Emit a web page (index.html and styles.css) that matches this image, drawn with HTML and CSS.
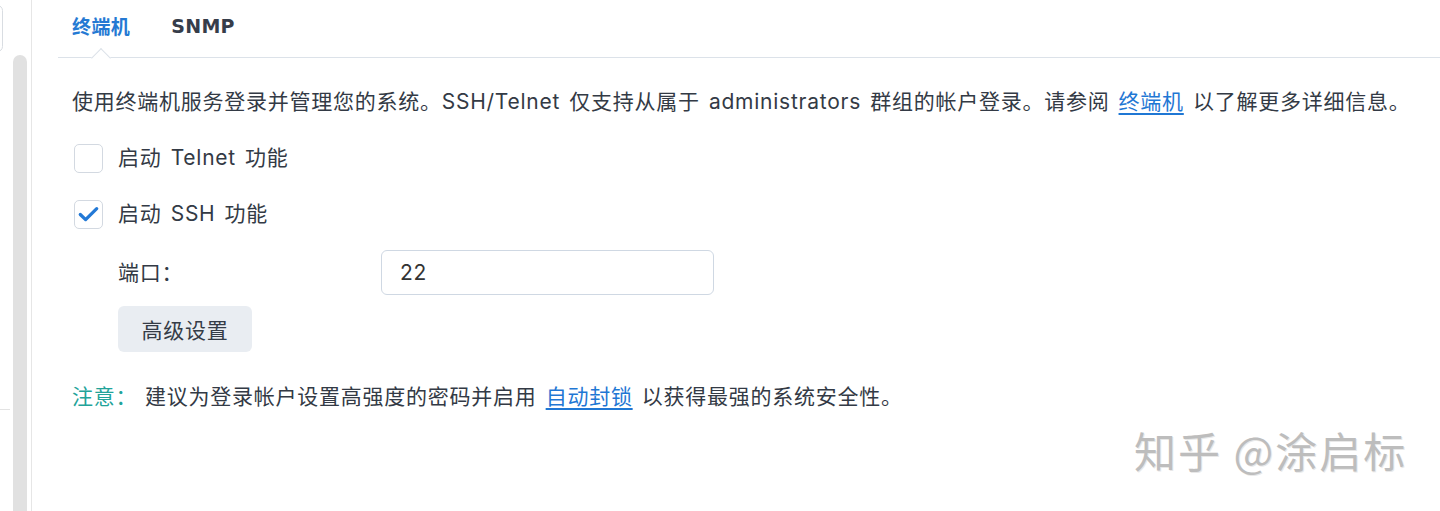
FILE: index.html
```html
<!DOCTYPE html>
<html lang="zh-CN">
<head>
<meta charset="utf-8">
<title>终端机</title>
<link rel="stylesheet" href="styles.css">
</head>
<body>
<div class="page">
  <aside class="side">
    <div class="side-left">
      <div class="side-box"></div>
      <div class="side-rule"></div>
    </div>
    <div class="scroll-track"></div>
    <div class="side-line"></div>
  </aside>
  <main class="main">
    <nav class="tabs">
      <span class="tab active">终端机<span class="caret"></span></span>
      <span class="tab latin">SNMP</span>
    </nav>
    <section class="content">
      <p class="desc">使用终端机服务登录并管理您的系统。SSH/Telnet 仅支持从属于 administrators 群组的帐户登录。请参阅 <a class="link" href="#">终端机</a> 以了解更多详细信息。</p>
      <label class="check-row">
        <span class="checkbox"></span>
        <span class="check-label">启动 Telnet 功能</span>
      </label>
      <label class="check-row">
        <span class="checkbox checked">
          <svg viewBox="0 0 28 28" width="28" height="28"><path d="M5.5 14.5 L11 19.8 L22.5 8.5" fill="none" stroke="#2379d6" stroke-width="3.4" stroke-linecap="round" stroke-linejoin="round"/></svg>
        </span>
        <span class="check-label">启动 SSH 功能</span>
      </label>
      <div class="sub">
        <div class="field-row">
          <span class="field-label">端口：</span>
          <div class="input">22</div>
        </div>
        <button class="btn" type="button">高级设置</button>
      </div>
      <p class="note"><span class="note-label">注意：</span>建议为登录帐户设置高强度的密码并启用 <a class="link" href="#">自动封锁</a> 以获得最强的系统安全性。</p>
    </section>
  </main>
  <div class="watermark">知乎 @涂启标</div>
</div>
</body>
</html>
```

FILE: styles.css
```css
* { box-sizing: border-box; }
html, body { margin: 0; padding: 0; background: #fff; }
body {
  font-family: "Inter", "Noto Sans CJK SC", sans-serif;
  color: #333a45;
  font-size: 21px;
  letter-spacing: 0.75px;
  word-spacing: 2.5px;
}
.page {
  position: relative;
  display: flex;
  width: 1440px;
  height: 511px;
  overflow: hidden;
}
.side {
  display: flex;
  width: 58px;
  flex: 0 0 58px;
  height: 511px;
}
.side-left {
  width: 13px;
  display: flex;
  flex-direction: column;
}
.side-box {
  width: 11px;
  height: 47px;
  margin-top: 5px;
  margin-left: -8px;
  border: 1px solid #d9dde2;
  border-radius: 6px;
  background: #fff;
}
.side-rule {
  margin-top: 357px;
  width: 10px;
  height: 1px;
  background: #e3e3e3;
}
.scroll-track {
  width: 14px;
  margin-top: 55px;
  height: 456px;
  background: #e1e1e1;
  border-radius: 7px 7px 0 0;
}
.side-line {
  width: 1px;
  margin-left: 4px;
  height: 511px;
  background: #e6e6e6;
}
.main {
  flex: 1;
  display: flex;
  flex-direction: column;
}
.tabs {
  position: relative;
  display: flex;
  gap: 41px;
  height: 58px;
  padding-left: 14px;
  padding-top: 12px;
  border-bottom: 1px solid #dce2e9;
}
.tab {
  position: relative;
  font-family: "Noto Sans CJK SC", sans-serif;
  font-weight: 700;
  font-size: 19px;
  line-height: 28px;
  color: #363d4a;
  letter-spacing: 0.4px;
  word-spacing: 0;
}
.tab.latin {
  font-family: "DejaVu Sans", sans-serif;
  letter-spacing: 0.3px;
}
.tab.active { color: #2579d3; }
.caret {
  position: absolute;
  left: 22px;
  top: 39px;
  width: 14px;
  height: 14px;
  background: #fff;
  border-top: 1px solid #dce2e9;
  border-left: 1px solid #dce2e9;
  transform: rotate(45deg);
}
.content {
  padding-left: 14px;
  display: flex;
  flex-direction: column;
}
.desc {
  margin: 30px 0 0;
  line-height: 28px;
  white-space: nowrap;
}
.link {
  color: #1f77d4;
  text-decoration: underline;
  text-underline-offset: 4px;
}
.check-row {
  display: flex;
  align-items: center;
  gap: 15px;
  height: 28px;
  margin-top: 28px;
  padding-left: 2px;
}
.check-row + .check-row { margin-top: 28px; }
.checkbox {
  width: 29px;
  height: 29px;
  border: 1px solid #d3d9e1;
  border-radius: 5px;
  background: #fff;
  display: flex;
  align-items: center;
  justify-content: center;
}
.checkbox svg { display: block; }
.check-label { line-height: 28px; }
.sub {
  padding-left: 46px;
  display: flex;
  flex-direction: column;
  align-items: flex-start;
}
.field-row {
  display: flex;
  align-items: center;
  margin-top: 22px;
}
.field-label {
  width: 263px;
  line-height: 28px;
}
.input {
  width: 333px;
  height: 45px;
  border: 1px solid #cfd8e3;
  border-radius: 6px;
  padding-left: 18px;
  line-height: 43px;
  color: #333;
}
.btn {
  margin-top: 11px;
  width: 134px;
  height: 46px;
  border: none;
  border-radius: 6px;
  background: #e9edf2;
  font: inherit;
  letter-spacing: 0.75px;
  color: #353c47;
  padding: 0;
}
.note {
  margin: 31px 0 0;
  line-height: 28px;
  white-space: nowrap;
}
.note-label {
  display: inline-block;
  width: 73px;
  color: #22a399;
}
.watermark {
  position: absolute;
  left: 1134px;
  top: 420px;
  font-family: "Noto Sans CJK SC", sans-serif;
  font-size: 42px;
  line-height: 60px;
  color: #bdbdbd;
  letter-spacing: 2px;
  word-spacing: 0;
  text-shadow: 1px 1px 0 #e8e8e8;
}
```
